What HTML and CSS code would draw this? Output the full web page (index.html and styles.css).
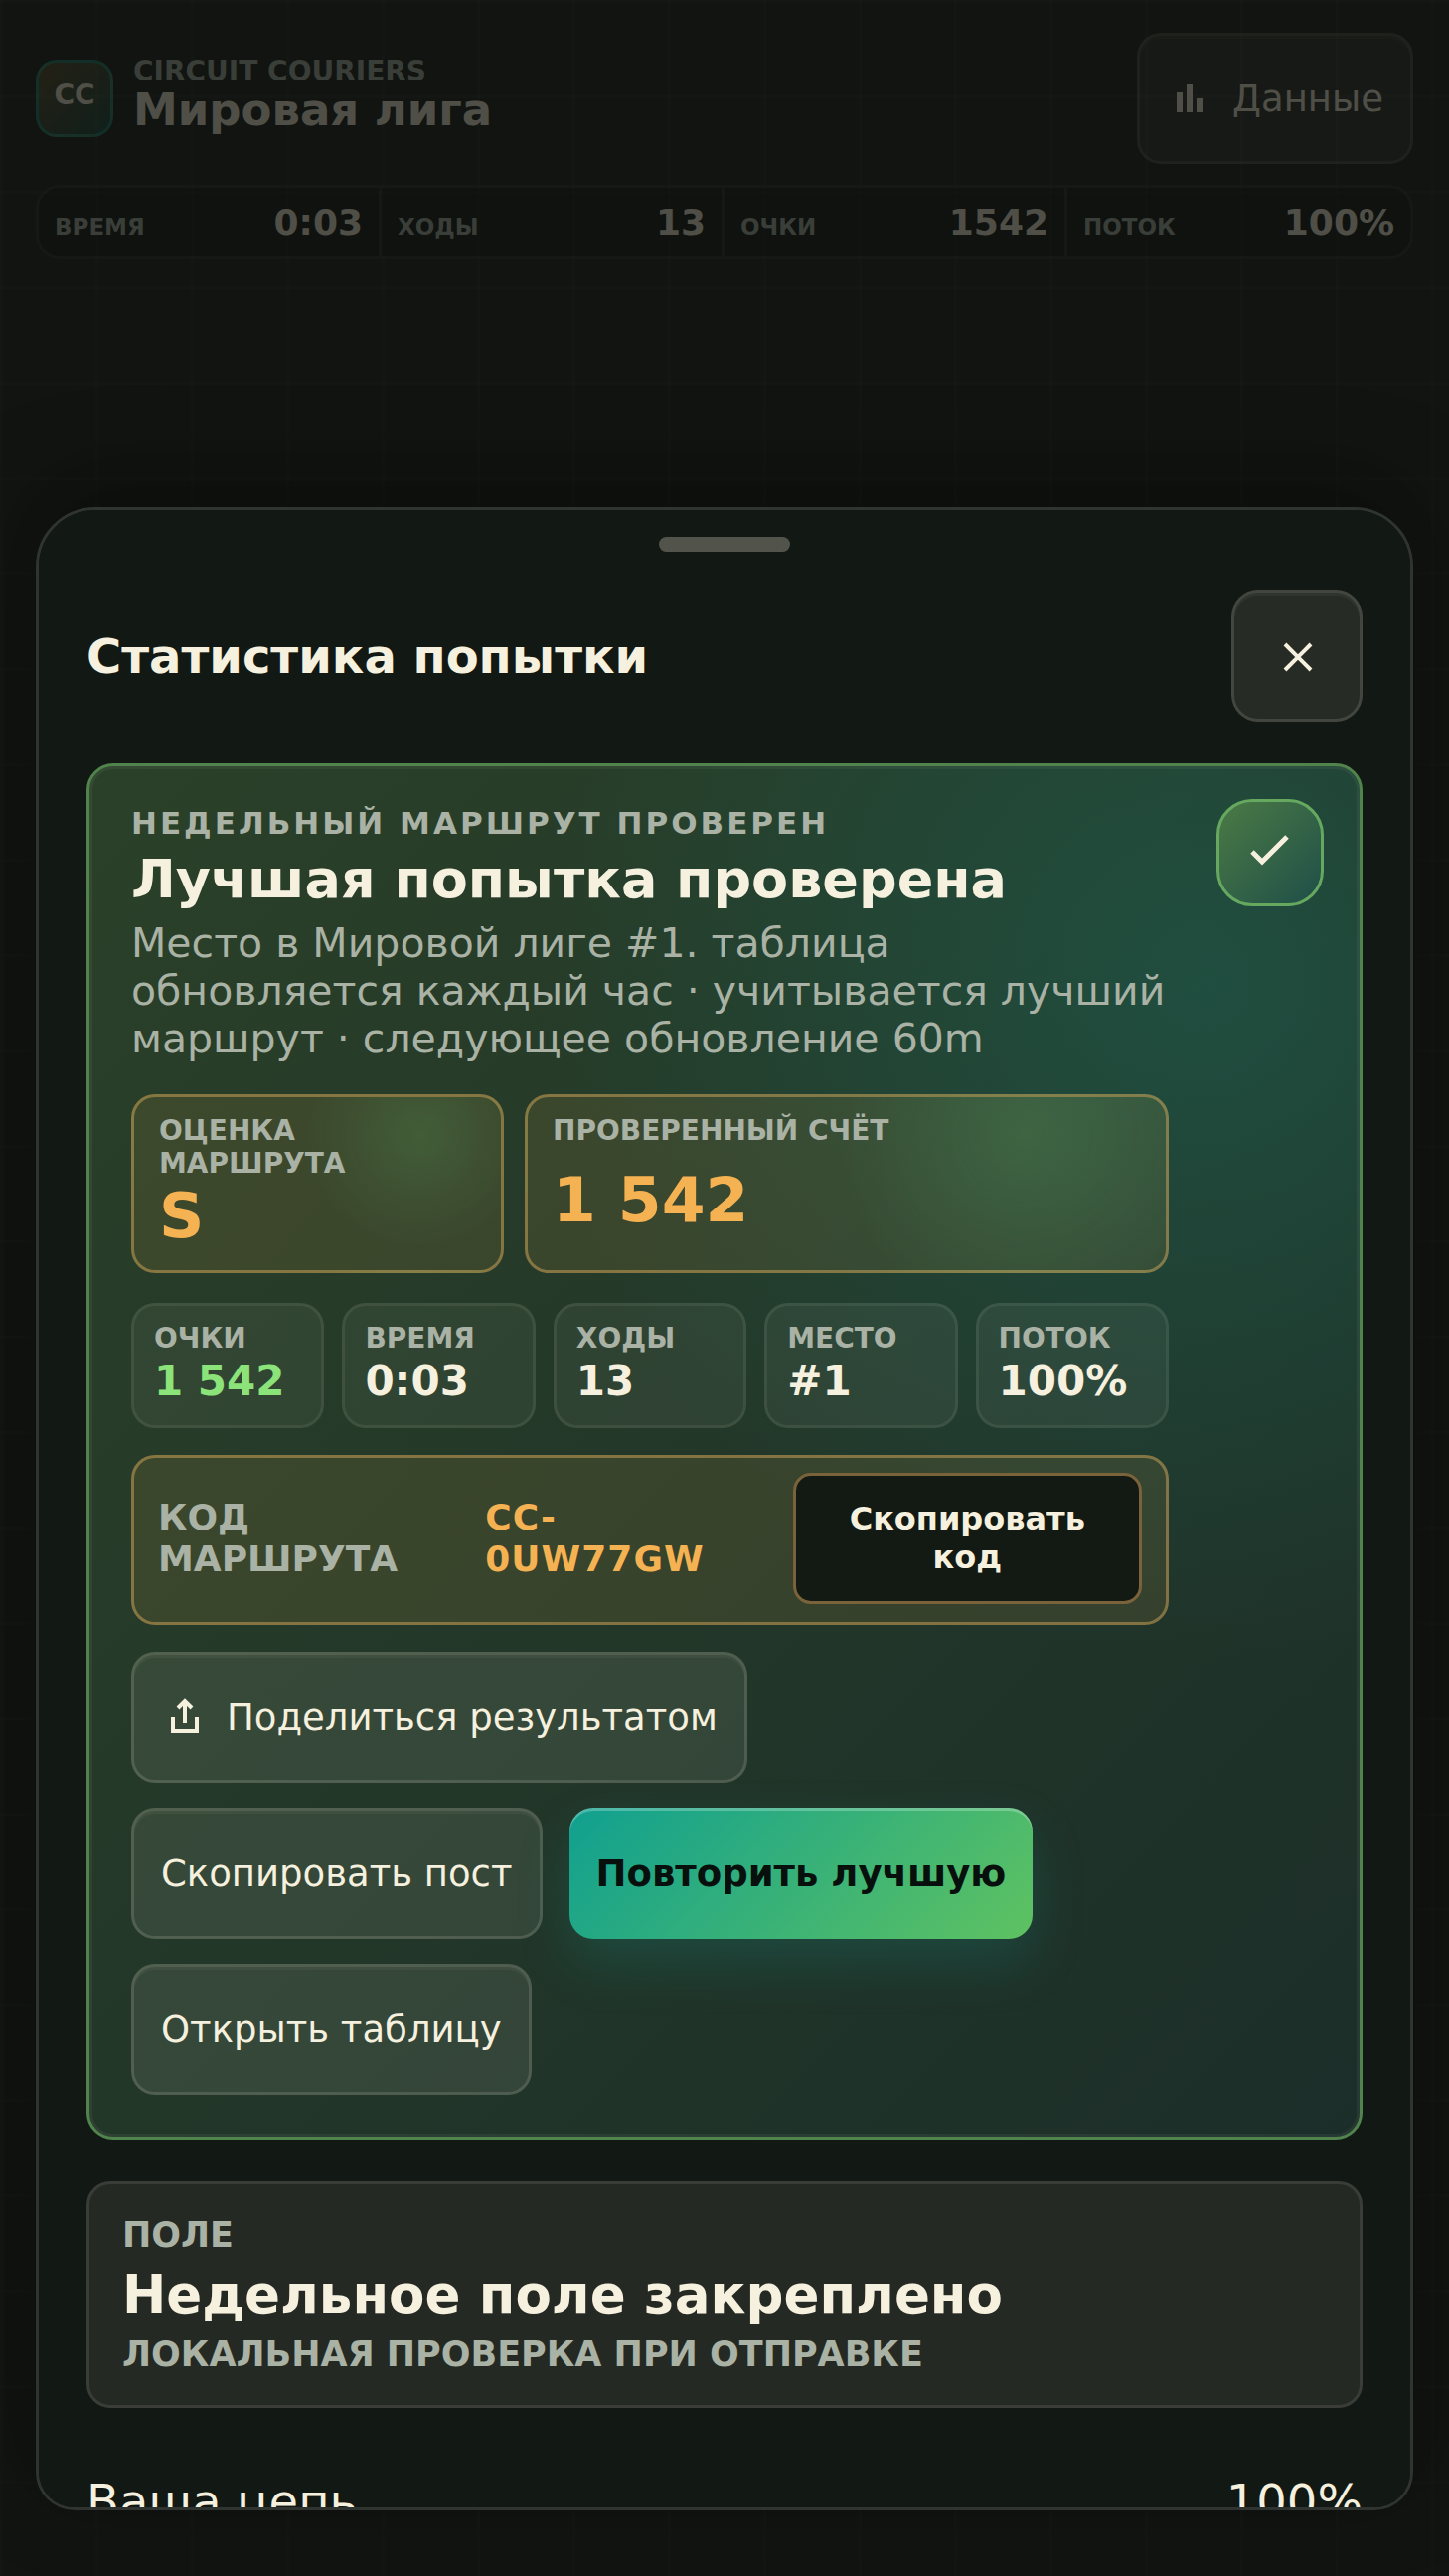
FILE: index.html
```html
<!DOCTYPE html>
<html lang="ru">
<head>
    <meta charset="UTF-8">
    <meta name="viewport" content="width=device-width, initial-scale=1.0">
    <title>Circuit Couriers</title>
    <link rel="stylesheet" href="styles.css">
</head>
<body>
    <header class="topbar">
        <div class="brand">
            <span class="brand-mark">CC</span>
            <div class="brand-text">
                <p class="brand-name">CIRCUIT COURIERS</p>
                <h1>Мировая лига</h1>
            </div>
        </div>
        <button type="button" class="btn">
            <svg class="icon" viewBox="0 0 24 24" aria-hidden="true">
                <path d="M6.500 9v10M11.500 5v14M16.500 12v7" fill="none" stroke="currentColor" stroke-width="3"/>
            </svg>
            <span>Данные</span>
        </button>
    </header>
    <dl class="hud">
        <div><dt>ВРЕМЯ</dt><dd>0:03</dd></div>
        <div><dt>ХОДЫ</dt><dd>13</dd></div>
        <div><dt>ОЧКИ</dt><dd>1542</dd></div>
        <div><dt>ПОТОК</dt><dd>100%</dd></div>
    </dl>

    <div class="backdrop">
        <section class="sheet" role="dialog" aria-labelledby="sheetTitle">
            <div class="handle"></div>
            <div class="sheet-head">
                <h2 id="sheetTitle">Статистика попытки</h2>
                <button type="button" class="btn close" aria-label="Закрыть">
                    <svg class="icon" viewBox="0 0 24 24" aria-hidden="true">
                        <path d="M6 6l13 13M19 6L6 19" fill="none" stroke="currentColor" stroke-width="2"/>
                    </svg>
                </button>
            </div>

            <article class="result">
                <div class="result-body">
                    <p class="eyebrow">НЕДЕЛЬНЫЙ МАРШРУТ ПРОВЕРЕН</p>
                    <h3>Лучшая попытка проверена</h3>
                    <p class="note">Место в Мировой лиге #1. таблица обновляется каждый час · учитывается лучший маршрут · следующее обновление 60m</p>

                    <div class="grades">
                        <div class="grade"><span>ОЦЕНКА МАРШРУТА</span><strong>S</strong></div>
                        <div class="grade"><span>ПРОВЕРЕННЫЙ СЧЁТ</span><strong>1 542</strong></div>
                    </div>

                    <dl class="stats">
                        <div class="score"><dt>ОЧКИ</dt><dd>1 542</dd></div>
                        <div><dt>ВРЕМЯ</dt><dd>0:03</dd></div>
                        <div><dt>ХОДЫ</dt><dd>13</dd></div>
                        <div><dt>МЕСТО</dt><dd>#1</dd></div>
                        <div><dt>ПОТОК</dt><dd>100%</dd></div>
                    </dl>

                    <div class="code-row">
                        <span>КОД МАРШРУТА</span>
                        <strong>CC-0UW77GW</strong>
                        <button type="button" class="copy-code">Скопировать код</button>
                    </div>

                    <div class="actions">
                        <button type="button" class="btn share">
                            <svg class="icon" viewBox="0 0 24 24" aria-hidden="true">
                                <path d="M6 12v7h12v-7M12 15V4.500M8.500 7.500L12 4l3.500 3.500" fill="none" stroke="currentColor" stroke-width="2"/>
                            </svg>
                            <span>Поделиться результатом</span>
                        </button>
                        <button type="button" class="btn">Скопировать пост</button>
                        <button type="button" class="btn primary">Повторить лучшую</button>
                        <button type="button" class="btn">Открыть таблицу</button>
                    </div>
                </div>
                <div class="badge">
                    <svg class="icon" viewBox="0 0 24 24" aria-hidden="true">
                        <path d="M3 11.500l5 5L20.500 4" fill="none" stroke="currentColor" stroke-width="2.500"/>
                    </svg>
                </div>
            </article>

            <article class="field">
                <span>ПОЛЕ</span>
                <strong>Недельное поле закреплено</strong>
                <span>ЛОКАЛЬНАЯ ПРОВЕРКА ПРИ ОТПРАВКЕ</span>
            </article>

            <div class="line">
                <span>Ваша цепь</span>
                <span>100%</span>
            </div>
        </section>
    </div>
</body>
</html>
```
FILE: styles.css
```css
:root {
    --cream: #f6f0df;
    --muted: #a9b2a4;
    --amber: #f5b252;
    --green: #8be37a;
    --panel: #121814;
}

* {
    box-sizing: border-box;
}

body {
    margin: 0;
    min-height: 100vh;
    padding: 33px 36px;
    color: var(--cream);
    font-family: "DejaVu Sans", sans-serif;
    background-color: #1a1e18;
    background-image:
        linear-gradient(rgba(246, 240, 223, 0.03) 3px, transparent 3px),
        linear-gradient(90deg, rgba(246, 240, 223, 0.03) 3px, transparent 3px);
    background-size: 96px 96px;
}

h1, h2, h3, p, dl, dd {
    margin: 0;
}

.icon {
    width: 48px;
    height: 48px;
    flex: none;
}

/* header */
.topbar,
.brand {
    display: flex;
    align-items: center;
}

.topbar {
    justify-content: space-between;
}

.brand {
    gap: 20px;
}

.brand-mark {
    display: flex;
    justify-content: center;
    width: 78px;
    height: 78px;
    padding-top: 16px;
    border: 3px solid rgba(20, 184, 166, 0.5);
    border-radius: 21px;
    background: linear-gradient(135deg, rgba(245, 178, 82, 0.3), rgba(20, 184, 166, 0.25));
    font-size: 28px;
    font-weight: bold;
}

.brand-text {
    padding-bottom: 6px;
}

.brand-name {
    color: var(--muted);
    font-size: 28px;
    font-weight: bold;
    line-height: 30px;
}

h1 {
    font-size: 45px;
    line-height: 48px;
}

.hud {
    display: grid;
    grid-template-columns: repeat(4, 1fr);
    margin-top: 21px;
    border: 3px solid rgba(246, 240, 223, 0.1);
    border-radius: 24px;
    background: rgba(0, 0, 0, 0.25);
}

.hud div {
    display: flex;
    align-items: baseline;
    justify-content: space-between;
    padding: 12px 16px;
    border-right: 3px solid rgba(246, 240, 223, 0.1);
}

.hud div:last-child {
    border-right: 0;
}

.hud dt {
    color: var(--muted);
    font-size: 23px;
    font-weight: bold;
}

.hud dd {
    font-size: 36px;
    font-weight: bold;
    line-height: 45px;
}

/* buttons */
.btn {
    display: flex;
    align-items: center;
    justify-content: center;
    gap: 18px;
    min-height: 132px;
    padding: 0 27px;
    border: 3px solid rgba(246, 240, 223, 0.14);
    border-radius: 24px;
    background: rgba(246, 240, 223, 0.09);
    box-shadow: inset 0 3px 0 rgba(246, 240, 223, 0.05);
    color: var(--cream);
    font-family: inherit;
    font-size: 37px;
    cursor: pointer;
}

.btn.primary {
    border: 0;
    background: linear-gradient(135deg, #10a090, #5fc261);
    box-shadow: inset 0 3px 0 rgba(255, 255, 255, 0.25), 0 24px 54px rgba(20, 160, 150, 0.2);
    color: #07100c;
    font-weight: bold;
}

.btn.close {
    width: 132px;
    padding: 0;
    border-radius: 27px;
}

/* bottom sheet */
.backdrop {
    position: fixed;
    inset: 0;
    display: flex;
    align-items: flex-end;
    padding: 0 36px 66px;
    background: rgba(14, 17, 14, 0.72);
}

.sheet {
    flex: 1;
    max-height: calc(100vh - 576px);
    padding: 27px 48px 48px;
    overflow-y: auto;
    scrollbar-width: none;
    border: 3px solid #303430;
    border-radius: 60px 60px 39px 39px;
    background: var(--panel);
    box-shadow: 0 -24px 90px rgba(0, 0, 0, 0.35);
}

.handle {
    width: 132px;
    height: 15px;
    margin: 0 auto 39px;
    border-radius: 8px;
    background: #52544c;
}

.sheet-head {
    display: flex;
    align-items: center;
    justify-content: space-between;
    margin-bottom: 42px;
}

h2 {
    font-size: 48px;
}

.result {
    display: grid;
    grid-template-columns: 1fr 108px;
    gap: 48px;
    align-items: start;
    padding: 33px 36px 42px 42px;
    border: 3px solid #50844c;
    border-radius: 27px;
    background:
        radial-gradient(circle at 88% 16%, rgba(20, 160, 145, 0.22), transparent 42%),
        linear-gradient(135deg, rgba(139, 227, 122, 0.2), rgba(80, 160, 150, 0.16));
    box-shadow: inset 0 0 0 3px rgba(246, 240, 223, 0.06);
}

.eyebrow {
    margin-top: 3px;
    color: var(--muted);
    font-size: 31px;
    font-weight: bold;
    letter-spacing: 3px;
    line-height: 42px;
}

h3 {
    margin-top: 6px;
    font-size: 54px;
    line-height: 60px;
}

.note {
    margin-top: 10px;
    color: var(--muted);
    font-size: 41px;
    line-height: 48px;
}

.grades {
    display: grid;
    grid-template-columns: 11fr 19fr;
    gap: 21px;
    margin-top: 32px;
}

.grade {
    display: grid;
    padding: 17px 25px;
    border: 3px solid rgba(245, 190, 100, 0.4);
    border-radius: 24px;
    background:
        radial-gradient(circle at 78% 22%, rgba(90, 170, 100, 0.22), transparent 36%),
        rgba(245, 178, 82, 0.1);
}

.grade span {
    color: var(--muted);
    font-size: 28px;
    font-weight: bold;
    line-height: 33px;
}

.grade strong {
    color: var(--amber);
    font-size: 63px;
    line-height: 74px;
}

.stats {
    display: grid;
    grid-template-columns: repeat(5, 1fr);
    gap: 18px;
    margin-top: 30px;
}

.stats div {
    padding: 16px 20px 19px;
    border: 3px solid rgba(246, 240, 223, 0.08);
    border-radius: 24px;
    background: rgba(246, 240, 223, 0.06);
}

.stats dt {
    color: var(--muted);
    font-size: 28px;
    font-weight: bold;
    line-height: 34px;
}

.stats dd {
    font-size: 42px;
    font-weight: bold;
    line-height: 51px;
}

.stats .score dd {
    color: var(--green);
}

.code-row {
    display: grid;
    grid-template-columns: 31fr 29fr 35fr;
    gap: 18px;
    align-items: center;
    margin-top: 27px;
    padding: 15px 24px 18px;
    border: 3px solid rgba(245, 190, 100, 0.4);
    border-radius: 24px;
    background: rgba(245, 178, 82, 0.1);
    font-size: 36px;
    font-weight: bold;
    line-height: 42px;
}

.code-row span {
    color: var(--muted);
}

.code-row strong {
    color: var(--amber);
    letter-spacing: 1px;
}

.copy-code {
    min-height: 132px;
    padding: 0 42px;
    border: 3px solid #7a623a;
    border-radius: 18px;
    background: #131a13;
    color: var(--cream);
    font-family: inherit;
    font-size: 32px;
    font-weight: bold;
    line-height: 39px;
    cursor: pointer;
}

.actions {
    display: flex;
    flex-wrap: wrap;
    gap: 25px 27px;
    margin-top: 27px;
}

.share {
    margin-right: 30%;
}

.badge {
    display: grid;
    place-items: center;
    height: 108px;
    border: 3px solid #66a85f;
    border-radius: 36px;
    background: linear-gradient(135deg, #4b7a45, #1f4f48);
}

.field {
    display: grid;
    margin-top: 42px;
    padding: 30px 33px;
    border: 3px solid #3a3d37;
    border-radius: 24px;
    background: #252923;
}

.field span {
    color: var(--muted);
    font-size: 35px;
    font-weight: bold;
    line-height: 42px;
}

.field strong {
    font-size: 53px;
    line-height: 78px;
}

.line {
    display: flex;
    justify-content: space-between;
    margin-top: 42px;
    padding: 24px 0;
    font-size: 48px;
}
```
